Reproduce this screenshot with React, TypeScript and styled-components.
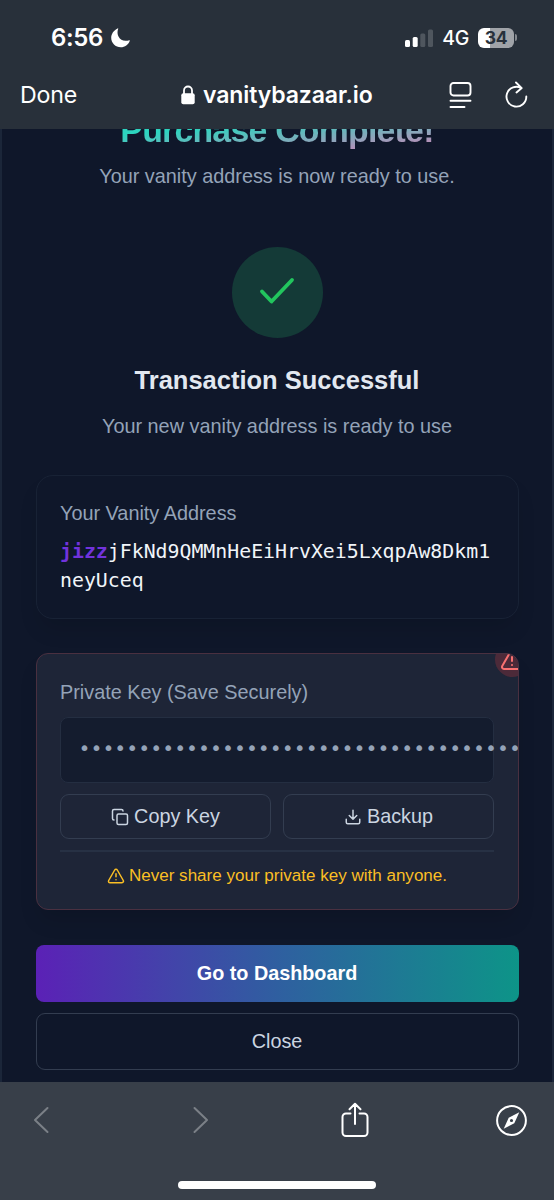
import React from "react";
import styled, { createGlobalStyle } from "styled-components";

const sans = `"Liberation Sans", Arial, sans-serif`;
const system = `Inter, "Liberation Sans", sans-serif`;
const mono = `"DejaVu Sans Mono", "Liberation Mono", monospace`;

const GlobalStyle = createGlobalStyle`
  *, *::before, *::after { box-sizing: border-box; }
  body { margin: 0; background: #0f172a; }
  svg { display: block; flex: none; }
  h1, h2, p { margin: 0; }
  button { appearance: none; margin: 0; padding: 0; border: 0; background: none; color: inherit; font: inherit; }
`;

const Screen = styled.div`
  display: flex;
  flex-direction: column;
  width: 554px;
  height: 1200px;
  overflow: hidden;
  background: #0f172a;
  font-family: ${sans};
`;

const TopChrome = styled.header`
  flex: none;
  height: 129px;
  background: #28303a;
  color: #fff;
  font-family: ${system};
`;

const StatusBar = styled.div`
  display: flex;
  align-items: center;
  height: 60px;
  padding: 15px 37px 0 51px;
`;

const Clock = styled.span`
  font-size: 24px;
  font-weight: 600;
  letter-spacing: -0.4px;
  margin-right: 8px;
`;

const Signals = styled.div`
  display: flex;
  align-items: center;
  margin-left: auto;
`;

const Network = styled.span`
  margin: 0 9px 0 9px;
  font-size: 19.5px;
  font-weight: 500;
  letter-spacing: -0.3px;
`;

const Battery = styled.div`
  display: flex;
  align-items: center;
  justify-content: center;
  width: 36px;
  height: 20px;
  border-radius: 6px;
  background: linear-gradient(90deg, #fff 0 12px, #a0a3a8 12px);
  color: #28303a;
  font-size: 17.5px;
  font-weight: 700;
  letter-spacing: -0.3px;
`;

const BatteryCap = styled.span`
  width: 2px;
  height: 7px;
  margin-left: 1px;
  border-radius: 0 2px 2px 0;
  background: #85898f;
`;

const AddressBar = styled.div`
  display: flex;
  align-items: center;
  height: 69px;
  padding: 0 26px 0 20px;
`;

const DoneButton = styled.button`
  width: 161px;
  text-align: left;
  font-size: 23.2px;
  letter-spacing: -0.2px;
`;

const Host = styled.span`
  margin-left: 8px;
  font-size: 23px;
  font-weight: 600;
  letter-spacing: -0.1px;
`;

const NavActions = styled.div`
  display: flex;
  align-items: center;
  gap: 33px;
  margin-left: auto;
`;

const Page = styled.main`
  flex: none;
  display: flex;
  flex-direction: column;
  height: 953px;
  overflow: hidden;
  padding: 0 33.5px;
  border: solid #1b2639;
  border-width: 0 2px;
`;

const Title = styled.h1`
  height: 46px;
  margin-top: -22px;
  background: linear-gradient(to bottom right, #2dd4bf 40%, #f472b6 97%);
  background-clip: text;
  -webkit-background-clip: text;
  color: transparent;
  font-size: 33.8px;
  font-weight: 700;
  line-height: 46px;
  letter-spacing: -0.75px;
  text-align: center;
  flex: none;
`;

const Muted = styled.p`
  color: #94a3b8;
  font-size: 19.85px;
  line-height: 28px;
`;

const Intro = styled(Muted)`
  margin-top: 9px;
  text-align: center;
`;

const Badge = styled.div`
  display: grid;
  place-items: center;
  flex: none;
  align-self: center;
  width: 91px;
  height: 91px;
  margin-top: 57px;
  padding-bottom: 3px;
  border-radius: 50%;
  background: #143a37;
`;

const Subtitle = styled.h2`
  margin-top: 24px;
  color: #e2e8f0;
  font-size: 25.5px;
  font-weight: 700;
  line-height: 36px;
  text-align: center;
`;

const Ready = styled(Muted)`
  margin-top: 14px;
  text-align: center;
`;

const AddressCard = styled.section`
  flex: none;
  height: 144px;
  margin-top: 35px;
  padding: 23px 23.5px;
  border: 1.4px solid #182235;
  border-radius: 17px;
  box-shadow: 0 14px 21px -4px rgba(0, 0, 0, 0.12);
`;

const Address = styled.p`
  margin-top: 11px;
  color: #f1f5f9;
  font-family: ${mono};
  font-size: 19.85px;
  line-height: 28.5px;
  word-break: break-all;
`;

const Prefix = styled.span`
  color: #7133dc;
  font-weight: 700;
`;

const KeyCard = styled.section`
  position: relative;
  flex: none;
  height: 257px;
  margin-top: 34px;
  padding: 24px 23.5px 0;
  overflow: hidden;
  border: 1.4px solid #4a3040;
  border-radius: 12px;
  background: #1e2537;
  box-shadow: 0 14px 21px -4px rgba(0, 0, 0, 0.12);
`;

const Warning = styled.div`
  position: absolute;
  top: -12px;
  right: -12px;
  display: grid;
  place-items: center;
  width: 35px;
  height: 35px;
  border-radius: 50%;
  background: #4c2a39;
  color: #f87171;
`;

const KeyField = styled.div`
  display: flex;
  align-items: center;
  height: 66px;
  margin-top: 11px;
  padding: 0 0 4px 17.5px;
  border: 1.4px solid #242e41;
  border-radius: 8px;
  background: #141c2e;
  color: #94a3b8;
  font-family: ${mono};
  font-size: 19.88px;
  white-space: nowrap;
`;

const ButtonRow = styled.div`
  display: grid;
  grid-template-columns: 1fr 1fr;
  gap: 12px;
  margin-top: 11px;
`;

const OutlineButton = styled.button<{ $height: number }>`
  display: flex;
  align-items: center;
  justify-content: center;
  gap: 5px;
  flex: none;
  height: ${(p) => p.$height}px;
  border: 1.4px solid #333d50;
  border-radius: 9px;
  color: #cbd5e1;
  font-size: 19.8px;
`;

const CloseButton = styled(OutlineButton)`
  margin-top: 11px;
`;

const Caution = styled.div`
  display: flex;
  align-items: center;
  justify-content: center;
  gap: 4px;
  height: 50px;
  margin-top: 11px;
  border-top: 2px solid #273144;
  color: #fbbf24;
  font-size: 17.05px;
`;

const PrimaryButton = styled.button`
  flex: none;
  height: 57px;
  margin-top: 35px;
  border-radius: 8px;
  background: linear-gradient(90deg, #5b21b6, #2f5fa0 50%, #0d9488);
  color: #fff;
  font-size: 19.8px;
  font-weight: 700;
`;

const BottomChrome = styled.footer`
  flex: none;
  display: flex;
  flex-direction: column;
  align-items: center;
  height: 118px;
  background: #383f49;
`;

const Toolbar = styled.nav`
  display: grid;
  grid-template-columns: 160px 148px 155px 31px;
  align-items: center;
  width: 100%;
  height: 76px;
  padding-left: 33px;
`;

const HomeIndicator = styled.div`
  width: 198px;
  height: 8px;
  margin-top: 23px;
  border-radius: 4px;
  background: #fff;
`;

const stroke = {
  fill: "none",
  stroke: "currentColor",
  strokeLinecap: "round",
  strokeLinejoin: "round",
} as const;

const AlertTriangle = ({ size }: { size: number }) => (
  <svg width={size} height={size} viewBox="0 0 24 24" strokeWidth="2" {...stroke}>
    <path d="m21.73 18-8-14a2 2 0 0 0-3.48 0l-8 14A2 2 0 0 0 4 21h16a2 2 0 0 0 1.73-3" />
    <path d="M12 9v4M12 17h.01" />
  </svg>
);

export default function App() {
  return (
    <Screen>
      <GlobalStyle />
      <TopChrome>
        <StatusBar>
          <Clock>6:56</Clock>
          <svg width="19" height="20" viewBox="0 0 19 20" fill="#fff">
            <path d="M7.2.7C5 6.200 8.200 12.800 14.600 12.800c1.300 0 2.500-.2 3.700-.6.400-.1.700.2.500.6C17.400 16.800 13.900 19.300 9.800 19.300 4.500 19.300.2 15.100.2 9.800.2 5.800 2.800 2.200 6.600.4c.4-.2.7 0 .6.3Z" />
          </svg>
          <Signals>
            <svg width="28" height="18" viewBox="0 0 28 18">
              <rect x="0" y="11" width="5" height="7" rx="1.500" fill="#fff" />
              <rect x="7.700" y="8" width="5" height="10" rx="1.500" fill="#fff" />
              <rect x="15.300" y="4.500" width="5" height="13.500" rx="1.500" fill="#4f565e" />
              <rect x="23" y="0.500" width="5" height="17.500" rx="1.500" fill="#4f565e" />
            </svg>
            <Network>4G</Network>
            <Battery>34</Battery>
            <BatteryCap />
          </Signals>
        </StatusBar>
        <AddressBar>
          <DoneButton>Done</DoneButton>
          <svg width="14" height="20" viewBox="0 0 14 20">
            <path d="M3 9V5.500a4 4 0 0 1 8 0V9" fill="none" stroke="#fff" strokeWidth="1.800" />
            <rect x="0.300" y="8.300" width="13.400" height="11" rx="2" fill="#fff" />
          </svg>
          <Host>vanitybazaar.io</Host>
          <NavActions>
            <svg width="24" height="28" viewBox="0 0 24 28" strokeWidth="1.900" {...stroke}>
              <rect x="2.500" y="2" width="20" height="12.500" rx="3" />
              <path d="M2.500 19.700h20M2.500 26h14" />
            </svg>
            <svg width="23" height="28" viewBox="0 0 23 28" strokeWidth="1.900" {...stroke}>
              <path d="M21.300 15.500A9.900 9.900 0 1 1 16.500 7.200M11 1.500l5.700 5.600-5.200 4.400" />
            </svg>
          </NavActions>
        </AddressBar>
      </TopChrome>

      <Page>
        <Title>Purchase Complete!</Title>
        <Intro>Your vanity address is now ready to use.</Intro>
        <Badge>
          <svg width="36" height="28" viewBox="0 0 36 28" strokeWidth="3.800" {...stroke} stroke="#22c55e">
            <path d="M3 14.500 12.500 24.500 33 3" />
          </svg>
        </Badge>
        <Subtitle>Transaction Successful</Subtitle>
        <Ready>Your new vanity address is ready to use</Ready>

        <AddressCard>
          <Muted>Your Vanity Address</Muted>
          <Address>
            <Prefix>jizz</Prefix>jFkNd9QMMnHeEiHrvXei5LxqpAw8Dkm1neyUceq
          </Address>
        </AddressCard>

        <KeyCard>
          <Warning>
            <AlertTriangle size={24} />
          </Warning>
          <Muted>Private Key (Save Securely)</Muted>
          <KeyField>{"•".repeat(44)}</KeyField>
          <ButtonRow>
            <OutlineButton $height={45}>
              <svg width="18" height="18" viewBox="0 0 24 24" strokeWidth="2" {...stroke}>
                <rect width="14" height="14" x="8" y="8" rx="2" />
                <path d="M4 16c-1.100 0-2-.9-2-2V4c0-1.100.9-2 2-2h10c1.100 0 2 .9 2 2" />
              </svg>
              Copy Key
            </OutlineButton>
            <OutlineButton $height={45}>
              <svg width="18" height="18" viewBox="0 0 24 24" strokeWidth="2" {...stroke}>
                <path d="M21 15v4a2 2 0 0 1-2 2H5a2 2 0 0 1-2-2v-4M7 10l5 5 5-5M12 15V3" />
              </svg>
              Backup
            </OutlineButton>
          </ButtonRow>
          <Caution>
            <AlertTriangle size={18} />
            Never share your private key with anyone.
          </Caution>
        </KeyCard>

        <PrimaryButton>Go to Dashboard</PrimaryButton>
        <CloseButton $height={57}>Close</CloseButton>
      </Page>

      <BottomChrome>
        <Toolbar>
          <svg width="16" height="28" viewBox="0 0 16 28" strokeWidth="2" {...stroke} stroke="#7b8087">
            <path d="M14.500 2 2 14l12.500 12" />
          </svg>
          <svg width="16" height="28" viewBox="0 0 16 28" strokeWidth="2" {...stroke} stroke="#7b8087">
            <path d="M1.500 2 14 14 1.500 26" />
          </svg>
          <svg width="28" height="36" viewBox="0 0 28 36" strokeWidth="2" {...stroke} stroke="#fff">
            <path d="M9.500 11.500H5a3.500 3.500 0 0 0-3.500 3.500v15.500A3.500 3.500 0 0 0 5 34h18a3.500 3.500 0 0 0 3.500-3.500V15a3.500 3.500 0 0 0-3.500-3.500h-4.500M14 22V2M8.500 7.300 14 1.800l5.500 5.500" />
          </svg>
          <svg width="31" height="31" viewBox="0 0 31 31">
            <circle cx="15.500" cy="15.500" r="14.400" fill="none" stroke="#fff" strokeWidth="2" />
            <path fill="#fff" fillRule="evenodd" d="M23.300 7.300 18.300 18.300 7.700 23.700 12.700 12.700ZM15.500 13.900a1.600 1.600 0 1 0 0 3.200 1.600 1.600 0 0 0 0-3.200Z" />
          </svg>
        </Toolbar>
        <HomeIndicator />
      </BottomChrome>
    </Screen>
  );
}
